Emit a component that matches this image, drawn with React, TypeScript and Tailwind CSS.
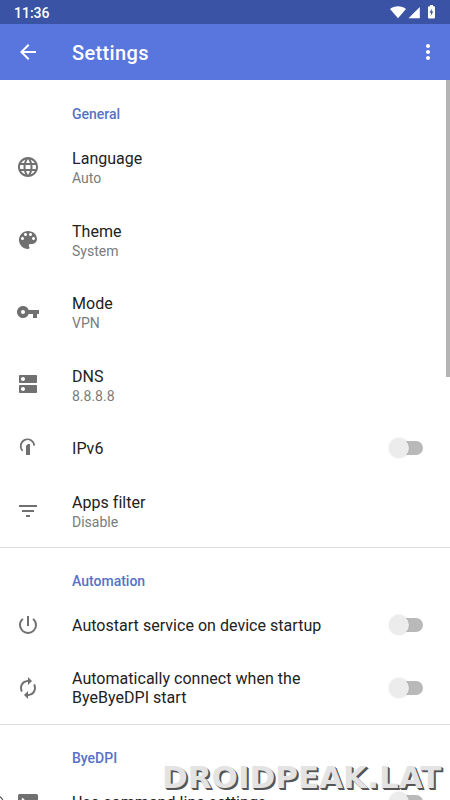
import React from "react";
import { MdLanguage, MdVpnKey, MdDns, MdFilterList, MdPowerSettingsNew, MdAutorenew, MdArrowBack, MdMoreVert } from "react-icons/md";

const Ipv6Icon = () => (
  <svg width="24" height="24" viewBox="0 0 24 24" fill="none">
    <path d="M6.6 14.8A6.8 6.8 0 1 1 18.3 9.6" stroke="currentColor" strokeWidth="1.7" />
    <path d="M10 9.8L12 8H14V19H10Z" fill="currentColor" />
  </svg>
);

const PaletteIcon = () => (
  <svg width="24" height="24" viewBox="0 0 24 24" fill="currentColor">
    <path d="M12 3c-4.97 0-9 4.03-9 9s4.03 9 9 9c.83 0 1.5-.67 1.5-1.5 0-.39-.15-.74-.39-1.01-.23-.26-.38-.61-.38-.99 0-.83.67-1.5 1.5-1.5H16c2.76 0 5-2.24 5-5 0-4.42-4.03-8-9-8zm-5.5 9c-.83 0-1.5-.67-1.5-1.5S5.67 9 6.5 9 8 9.67 8 10.5 7.33 12 6.5 12zm3-4C8.67 8 8 7.33 8 6.5S8.67 5 9.5 5s1.5.67 1.5 1.5S10.33 8 9.5 8zm5 0c-.83 0-1.5-.67-1.5-1.5S13.67 5 14.5 5s1.5.67 1.5 1.5S15.33 8 14.5 8zm3 4c-.83 0-1.5-.67-1.5-1.5S16.67 9 17.5 9s1.5.67 1.5 1.5-.67 1.5-1.5 1.5z" />
  </svg>
);

const TerminalIcon = () => (
  <svg width="24" height="24" viewBox="0 0 24 24">
    <rect x="2" y="4" width="20" height="16" rx="1.5" fill="currentColor" />
    <path d="M6 8.5L10 12.5L6 16.5M12 16H18" fill="none" stroke="white" strokeWidth="1.8" />
  </svg>
);

const Switch = () => (
  <div className="mr-[27px] flex h-5 w-[34px] shrink-0 items-center">
    <div className="z-10 size-5 shrink-0 rounded-full bg-[#ececec] shadow-[0_0_2px_rgba(0,0,0,0.14)]" />
    <div className="-ml-[17px] h-3.5 w-[31px] shrink-0 rounded-full bg-[#b9b9b9]" />
  </div>
);

type RowProps = { icon: React.ReactNode; title: string; sub?: string; toggle?: boolean; className: string };

const Row = ({ icon, title, sub, toggle, className }: RowProps) => (
  <div className={`flex shrink-0 items-center ${className}`}>
    <div className="flex w-[72px] shrink-0 pl-4 text-[#707070]">{icon}</div>
    <div className={sub ? "flex-1 pt-[3.5px]" : "flex-1 pt-px"}>
      <div className="max-w-[260px] text-[16px] leading-[19px] tracking-[0.03px] text-[#222]">{title}</div>
      {sub && <div className="text-[14px] leading-5 text-[#7b7b7b]">{sub}</div>}
    </div>
    {toggle && <Switch />}
  </div>
);

const Heading = ({ children }: { children: string }) => (
  <div className="h-[51px] shrink-0 pl-[72px] pt-[23.5px] text-[14px] font-medium leading-5 text-[#5672c6]">{children}</div>
);

export default function App() {
  return (
    <div className="relative flex h-[800px] w-[450px] flex-col overflow-hidden bg-white font-['Roboto',sans-serif]">
      <div className="flex h-6 shrink-0 items-center justify-between bg-[#3b53a4] pl-[14px] pr-[14px] text-white">
        <span className="pt-[2px] text-[14px] font-medium leading-5">11:36</span>
        <svg width="47" height="16" viewBox="0 0 47 16" fill="currentColor">
          <path d="M1 5C5.5 1.4 12.5 1.4 17 5L9 14.2Z" />
          <path d="M19.5 14.2H30.8V3Z" />
          <path d="M41 2.2V1H44V2.2H45.2Q46 2.2 46 3.2V13.5Q46 14.5 45 14.5H40Q39 14.5 39 13.5V3.2Q39 2.2 40 2.2Z" />
          <path d="M43 4.5L40.5 8.8H42.2L41.6 12.3L44.3 7.6H42.7Z" fill="#3b53a4" />
        </svg>
      </div>
      <header className="flex h-14 shrink-0 items-center bg-[#5975de] text-white">
        <div className="w-[72px] pl-4"><MdArrowBack size={24} /></div>
        <h1 className="flex-1 pt-[2px] text-[20px] font-medium leading-6 tracking-[0.35px]">Settings</h1>
        <MdMoreVert size={24} className="mr-[10px]" />
      </header>
      <main className="flex flex-1 flex-col overflow-hidden">
        <Heading>General</Heading>
        <Row className="h-[72.4px]" icon={<MdLanguage size={24} />} title="Language" sub="Auto" />
        <Row className="h-[72.4px]" icon={<PaletteIcon />} title="Theme" sub="System" />
        <Row className="h-[72.4px]" icon={<MdVpnKey size={24} />} title="Mode" sub="VPN" />
        <Row className="h-[72.4px]" icon={<MdDns size={24} />} title="DNS" sub="8.8.8.8" />
        <Row className="h-[54px]" icon={<Ipv6Icon />} title="IPv6" toggle />
        <Row className="h-[73.4px] border-b border-[#dedede]" icon={<MdFilterList size={24} />} title="Apps filter" sub="Disable" />
        <Heading>Automation</Heading>
        <Row className="h-[53px]" icon={<MdPowerSettingsNew size={24} />} title="Autostart service on device startup" toggle />
        <Row className="h-[73px] border-b border-[#dedede]" icon={<MdAutorenew size={24} />} title="Automatically connect when the ByeByeDPI start" toggle />
        <Heading>ByeDPI</Heading>
        <Row className="h-[52px]" icon={<TerminalIcon />} title="Use command line settings" toggle />
      </main>
      <div className="absolute right-0 top-20 h-[297px] w-1 bg-[#b4b4b4]" />
      <svg className="absolute bottom-0 left-0" width="4" height="5" viewBox="0 0 4 5"><path d="M0 1.5L3 5" stroke="#666" strokeWidth="1.2" /></svg>
      <div className="absolute left-[162px] top-[759px] z-20 whitespace-nowrap font-['DejaVu_Sans',sans-serif] text-[31px] font-bold leading-[36px] text-[#e3e3e3] [text-shadow:1px_1px_0_#555,2px_2px_0_#555]">DROIDPEAK.LAT</div>
    </div>
  );
}
